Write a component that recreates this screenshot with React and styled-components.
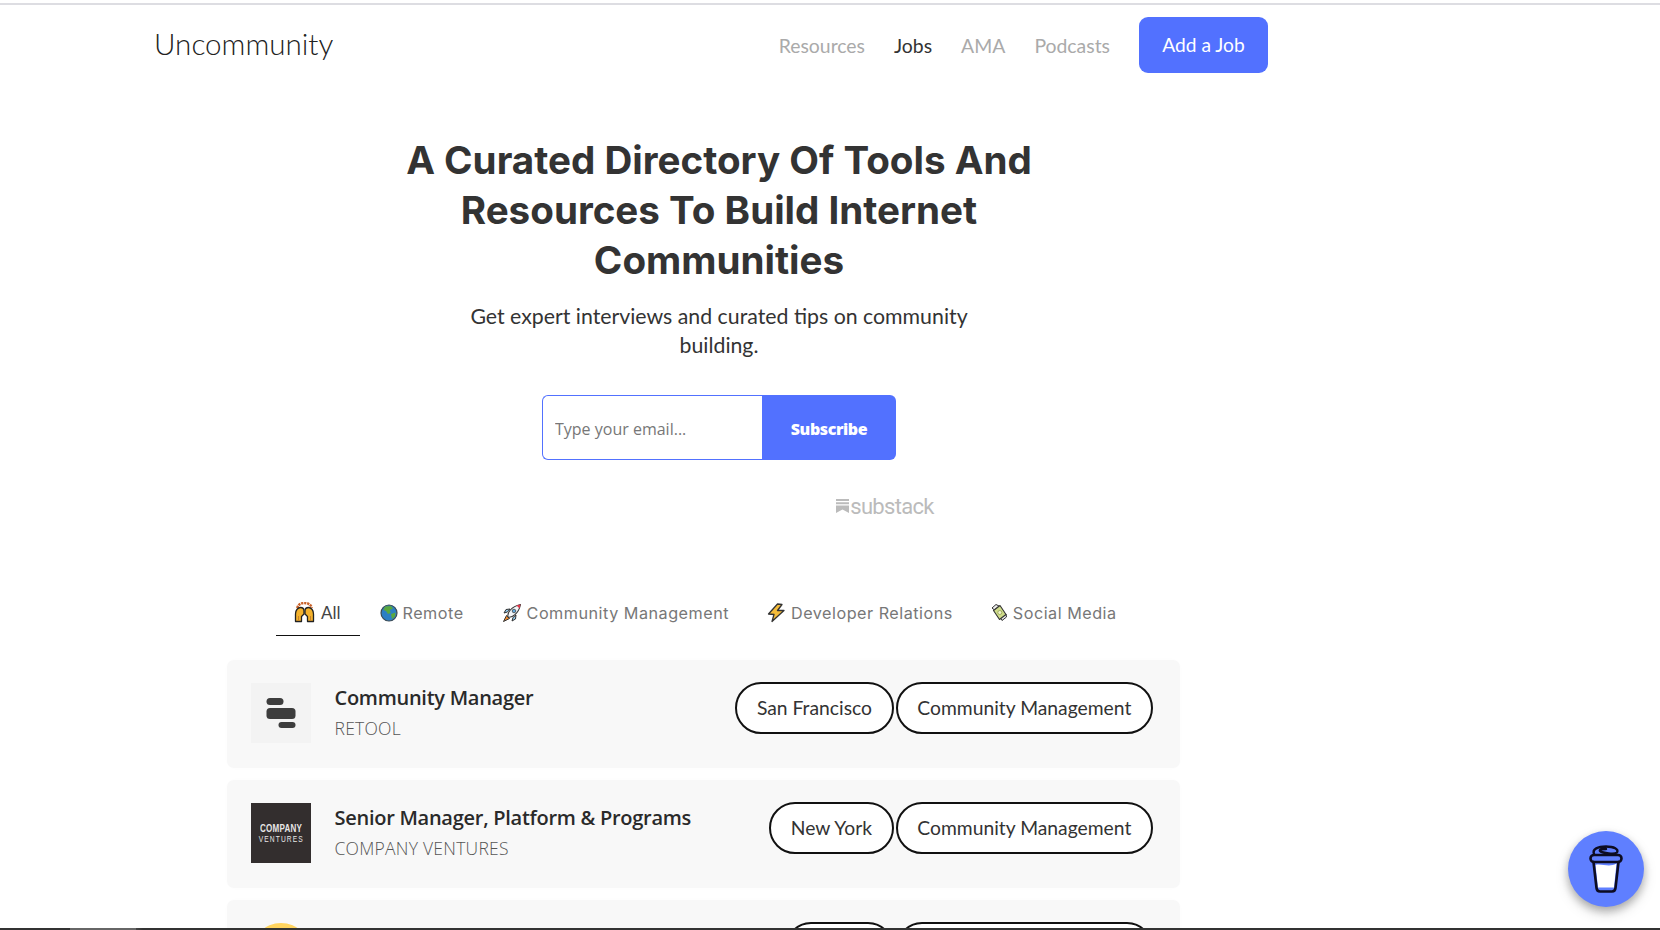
import React from "react";
import styled, { createGlobalStyle } from "styled-components";

const GlobalStyle = createGlobalStyle`
  html, body {
    margin: 0;
    padding: 0;
    background: #fff;
    overflow: hidden;
  }
  * {
    box-sizing: border-box;
  }
`;

const Page = styled.div`
  height: 930px;
  overflow: hidden;
  padding-top: 3px;
  font-family: "Lato", sans-serif;
  color: #333;
`;

const TopRule = styled.div`
  height: 2px;
  background: #dddde2;
`;

const Nav = styled.nav`
  display: flex;
  align-items: center;
  justify-content: space-between;
  width: 1114px;
  margin: 12px 0 0 154px;
`;

const Logo = styled.div`
  font-size: 29.6px;
  font-weight: 300;
  color: #222;
  line-height: 54px;
  padding-bottom: 2px;
`;

const NavLinks = styled.div`
  display: flex;
  align-items: center;
  gap: 29px;
`;

const NavLink = styled.a`
  font-size: 19.4px;
  color: ${(props) => (props.$active ? "#333" : "#aaa")};
`;

const AddButton = styled.a`
  display: flex;
  align-items: center;
  justify-content: center;
  width: 129px;
  height: 56px;
  border-radius: 9px;
  background: #5271ff;
  color: #fff;
  font-size: 19.2px;
  padding-bottom: 2px;
`;

const Hero = styled.section`
  display: flex;
  flex-direction: column;
  align-items: center;
  width: 1438px;
  margin-top: 62px;
`;

const Title = styled.h1`
  margin: 0;
  font-family: "Inter", sans-serif;
  font-size: 38.6px;
  font-weight: 700;
  line-height: 50px;
  text-align: center;
  color: #333;
`;

const Subtitle = styled.p`
  margin: 17px 0 0;
  width: 520px;
  font-size: 21.3px;
  line-height: 28.5px;
  text-align: center;
  color: #333;
`;

const Form = styled.form`
  display: flex;
  width: 354px;
  height: 65px;
  margin-top: 36px;
`;

const EmailInput = styled.input`
  flex: 1;
  min-width: 0;
  border: 1px solid #5271ff;
  border-right: none;
  border-radius: 6px 0 0 6px;
  padding: 3px 12px 0;
  font-family: "Open Sans", sans-serif;
  font-size: 16px;
  outline: none;
  &::placeholder {
    color: #777;
    opacity: 1;
  }
`;

const SubscribeButton = styled.button`
  width: 134px;
  border: none;
  border-radius: 0 6px 6px 0;
  padding: 2px 0 0;
  background: #5271ff;
  color: #fff;
  font-family: "Open Sans", sans-serif;
  font-size: 16px;
  font-weight: 800;
  letter-spacing: -0.4px;
`;

const SubstackMark = styled.div`
  display: flex;
  align-items: center;
  gap: 1px;
  height: 30px;
  margin: 31px 0 0 332px;
  color: #bbb;
  font-family: "Roboto", sans-serif;
  font-size: 22px;
  letter-spacing: -0.7px;
`;

const Tabs = styled.div`
  display: flex;
  align-items: stretch;
  height: 40px;
  margin: 75px 0 0 276px;
`;

const Tab = styled.div`
  display: flex;
  align-items: center;
  gap: ${(props) => (props.$active ? "6px" : "5px")};
  height: 40px;
  padding: 0 ${(props) => (props.$active ? "19px" : "18px")} 7px
    ${(props) => (props.$active ? "18px" : "20px")};
  font-family: ${(props) => (props.$active ? '"Lato"' : '"Inter"')}, sans-serif;
  font-size: ${(props) => (props.$active ? "17px" : "16.2px")};
  letter-spacing: ${(props) => (props.$active ? "0" : "0.5px")};
  color: ${(props) => (props.$active ? "#444" : "#777")};
  border-bottom: ${(props) => (props.$active ? "1.5px solid #111" : "none")};
`;

const JobList = styled.div`
  display: flex;
  flex-direction: column;
  gap: 12px;
  width: 953px;
  margin: 24px 0 0 227px;
`;

const JobCard = styled.article`
  display: flex;
  align-items: flex-start;
  justify-content: space-between;
  height: 108px;
  padding: 22px 27px 0 24px;
  background: #f8f8f8;
  border-radius: 7px;
  box-shadow: 0 0 10px rgba(0, 0, 0, 0.012);
`;

const JobLeft = styled.div`
  display: flex;
  align-items: flex-start;
  gap: 24px;
  padding-top: 1px;
`;

const LogoBox = styled.div`
  display: flex;
  align-items: center;
  justify-content: center;
  flex-direction: column;
  width: 60px;
  height: 60px;
  background: ${(props) => props.$bg};
  border-radius: ${(props) => (props.$round ? "50%" : "0")};
`;

const VentureWord = styled.span`
  font-family: "Liberation Sans", sans-serif;
  font-size: ${(props) => (props.$thin ? "9.5px" : "11.5px")};
  font-weight: ${(props) => (props.$thin ? 400 : 700)};
  line-height: ${(props) => (props.$thin ? "10px" : "12px")};
  color: #e8e6e6;
  transform: scaleX(0.7);
  letter-spacing: ${(props) => (props.$thin ? "1.6px" : "0.3px")};
`;

const JobText = styled.div`
  display: flex;
  flex-direction: column;
  margin-left: -0.5px;
  padding-top: 1px;
`;

const JobTitle = styled.h3`
  margin: 0;
  font-family: "Open Sans", sans-serif;
  font-size: 20px;
  font-weight: 600;
  line-height: 28px;
  letter-spacing: -0.27px;
  color: #2a2a2a;
`;

const JobCompany = styled.div`
  margin-top: 3px;
  font-family: "Open Sans", sans-serif;
  font-size: 17.5px;
  font-weight: 300;
  line-height: 26px;
  letter-spacing: 0.25px;
  color: #555;
`;

const Pills = styled.div`
  display: flex;
  gap: 2px;
`;

const Pill = styled.span`
  display: flex;
  align-items: center;
  height: 52px;
  padding: 0 19.7px 1px;
  background: #fff;
  border: 2px solid #111;
  border-radius: 26px;
  font-size: 19.3px;
  color: #333;
`;

const CoffeeButton = styled.div`
  position: fixed;
  right: 16px;
  bottom: 23px;
  display: flex;
  align-items: center;
  justify-content: center;
  width: 76px;
  height: 76px;
  border-radius: 50%;
  background: #5f7fff;
  box-shadow: 0 4px 8px rgba(0, 0, 0, 0.25), 0 6px 14px rgba(0, 0, 0, 0.15);
`;

const BottomBar = styled.div`
  position: fixed;
  left: 0;
  right: 0;
  bottom: 0;
  height: 2px;
  background: linear-gradient(
    to right,
    #333 70px,
    #666 70px,
    #666 136px,
    #444 136px,
    #333 143px
  );
`;

function RaisedHands() {
  return (
    <svg width="21" height="21" viewBox="0 0 21 21">
      <path d="M3.500 6 A7 5 0 0 1 17.500 6" fill="none" stroke="#c9622a" strokeWidth="2.600" strokeDasharray="2.200 .8" />
      <path
        d="M1.500 19.500 V12 C1.500 8 4 5.500 6.500 5.500 C8.800 5.500 10 7 10 9 V12 L7.500 14.500 V19.500z"
        fill="#f4b22c"
        stroke="#222"
        strokeWidth="1.300"
        strokeLinejoin="round"
      />
      <path
        d="M19.500 19.500 V12 C19.500 8 17 5.500 14.500 5.500 C12.200 5.500 11 7 11 9 V12 L13.500 14.500 V19.500z"
        fill="#f4b22c"
        stroke="#222"
        strokeWidth="1.300"
        strokeLinejoin="round"
      />
      <path d="M4.500 19 V14 M16.500 19 V14" stroke="#c9822a" strokeWidth="1" />
    </svg>
  );
}

function Globe() {
  return (
    <svg width="18" height="18" viewBox="0 0 18 18">
      <circle cx="9" cy="9" r="8" fill="#2c7fc4" stroke="#3a4a55" strokeWidth="1.200" />
      <path d="M5 2.500 L11 2 L13 4.500 L10 6 L10.500 9 L8 10 L6 7 L3.500 6z" fill="#5aa83e" />
      <path d="M11 10 L15.500 8.500 L15 12.500 L12 15z" fill="#5aa83e" />
    </svg>
  );
}

function Rocket() {
  return (
    <svg width="20" height="20" viewBox="0 0 20 20">
      <path d="M4.500 12.500 L1.500 18.500 L7.500 15.500z" fill="#ef8a2d" stroke="#333" strokeWidth="1" strokeLinejoin="round" />
      <path d="M5.500 9 L2 10 L4 6.500 L8 6z" fill="#8fc7ea" stroke="#333" strokeWidth="1" strokeLinejoin="round" />
      <path d="M11 14.500 L10 18 L13.500 16 L14 12z" fill="#8fc7ea" stroke="#333" strokeWidth="1" strokeLinejoin="round" />
      <path
        d="M6 14 C5 10 9 3.500 18.500 1.500 C16.500 11 10 15 6 14z"
        fill="#f2f5f7"
        stroke="#333"
        strokeWidth="1.100"
        strokeLinejoin="round"
      />
      <path d="M14.500 2.500 L18.500 1.500 L17.500 5.500z" fill="#e2364a" />
      <circle cx="12" cy="8" r="1.800" fill="#5fa8dc" stroke="#333" strokeWidth=".7" />
    </svg>
  );
}

function Bolt() {
  return (
    <svg width="19" height="20" viewBox="0 0 19 20">
      <path
        d="M10.500 1 L1.500 11 L7 11.500 L5 18.500 L17 7.500 L10.500 7.500 L15 1.500z"
        fill="#f6bd3a"
        stroke="#333"
        strokeWidth="1.300"
        strokeLinejoin="round"
      />
    </svg>
  );
}

function MoneyWings() {
  return (
    <svg width="17" height="19" viewBox="0 0 17 19">
      <path d="M1 5 L5 1.500 L8 3 L3.500 7z" fill="#eee" stroke="#333" strokeWidth="1" strokeLinejoin="round" />
      <path d="M11 17.500 L15.500 14 L15 11 L9.500 15z" fill="#eee" stroke="#333" strokeWidth="1" strokeLinejoin="round" />
      <path d="M2.500 7.500 L9 2.500 L15 11.500 L8.500 16.500z" fill="#cfdc8a" stroke="#333" strokeWidth="1.100" strokeLinejoin="round" />
      <circle cx="8.800" cy="9.500" r="2" fill="#eef2c8" stroke="#7c8a3a" strokeWidth=".6" />
    </svg>
  );
}

function SubstackIcon() {
  return (
    <svg width="13" height="14" viewBox="0 0 13 14">
      <path d="M0 0H13V2H0zM0 3.200H13V5.200H0zM0 6.400H13V14L6.500 10.500L0 14z" fill="#bbb" />
    </svg>
  );
}

function RetoolMark() {
  return (
    <svg width="30" height="32" viewBox="0 0 30 32">
      <rect x="0.500" y="1" width="17" height="7" rx="3.500" fill="#3d3d3d" />
      <rect x="0.500" y="11" width="29" height="11" rx="3.500" fill="#3d3d3d" />
      <rect x="12.500" y="25" width="17" height="6" rx="3" fill="#3d3d3d" />
    </svg>
  );
}

function CoffeeCup() {
  return (
    <svg width="34" height="50" viewBox="0 0 34 50">
      <path d="M6.500 21 C12 19 20 24 27.500 19.500 L25 43.500 H9z" fill="#fff" />
      <path
        d="M4.500 18 L7.500 44 C7.800 46.500 9 47.500 11 47.500 H23 C25 47.500 26.200 46.500 26.500 44 L29.500 18"
        fill="none"
        stroke="#0d0c22"
        strokeWidth="2.600"
        strokeLinecap="round"
      />
      <rect x="1.500" y="11" width="31" height="7" rx="3.500" fill="none" stroke="#0d0c22" strokeWidth="2.600" />
      <path
        d="M5 10 C3 5 9 2.500 17 2.500 C25 2.500 30 5 28 8.500 C26 10.500 14 9.500 11 7 C10 5.500 13 5 17 5"
        fill="none"
        stroke="#0d0c22"
        strokeWidth="2.400"
        strokeLinecap="round"
      />
    </svg>
  );
}

const tabs = [
  { label: "All", icon: <RaisedHands />, active: true },
  { label: "Remote", icon: <Globe /> },
  { label: "Community Management", icon: <Rocket /> },
  { label: "Developer Relations", icon: <Bolt /> },
  { label: "Social Media", icon: <MoneyWings /> },
];

export default function App() {
  return (
    <>
      <GlobalStyle />
      <Page>
        <TopRule />
        <Nav>
          <Logo>Uncommunity</Logo>
          <NavLinks>
            <NavLink>Resources</NavLink>
            <NavLink $active>Jobs</NavLink>
            <NavLink>AMA</NavLink>
            <NavLink>Podcasts</NavLink>
            <AddButton>Add a Job</AddButton>
          </NavLinks>
        </Nav>

        <Hero>
          <Title>
            A Curated Directory Of Tools And
            <br />
            Resources To Build Internet
            <br />
            Communities
          </Title>
          <Subtitle>Get expert interviews and curated tips on community building.</Subtitle>
          <Form>
            <EmailInput placeholder="Type your email..." />
            <SubscribeButton type="button">Subscribe</SubscribeButton>
          </Form>
          <SubstackMark>
            <SubstackIcon />
            substack
          </SubstackMark>
        </Hero>

        <Tabs>
          {tabs.map((tab) => (
            <Tab key={tab.label} $active={tab.active}>
              {tab.icon}
              {tab.label}
            </Tab>
          ))}
        </Tabs>

        <JobList>
          <JobCard>
            <JobLeft>
              <LogoBox $bg="#f3f3f3">
                <RetoolMark />
              </LogoBox>
              <JobText>
                <JobTitle>Community Manager</JobTitle>
                <JobCompany>RETOOL</JobCompany>
              </JobText>
            </JobLeft>
            <Pills>
              <Pill>San Francisco</Pill>
              <Pill>Community Management</Pill>
            </Pills>
          </JobCard>
          <JobCard>
            <JobLeft>
              <LogoBox $bg="#332e2e">
                <VentureWord>COMPANY</VentureWord>
                <VentureWord $thin>VENTURES</VentureWord>
              </LogoBox>
              <JobText>
                <JobTitle>Senior Manager, Platform &amp; Programs</JobTitle>
                <JobCompany>COMPANY VENTURES</JobCompany>
              </JobText>
            </JobLeft>
            <Pills>
              <Pill>New York</Pill>
              <Pill>Community Management</Pill>
            </Pills>
          </JobCard>
          <JobCard>
            <JobLeft>
              <LogoBox $bg="#ffd45e" $round />
            </JobLeft>
            <Pills>
              <Pill>Remote</Pill>
              <Pill>Community Management</Pill>
            </Pills>
          </JobCard>
        </JobList>
      </Page>
      <CoffeeButton>
        <CoffeeCup />
      </CoffeeButton>
      <BottomBar />
    </>
  );
}
